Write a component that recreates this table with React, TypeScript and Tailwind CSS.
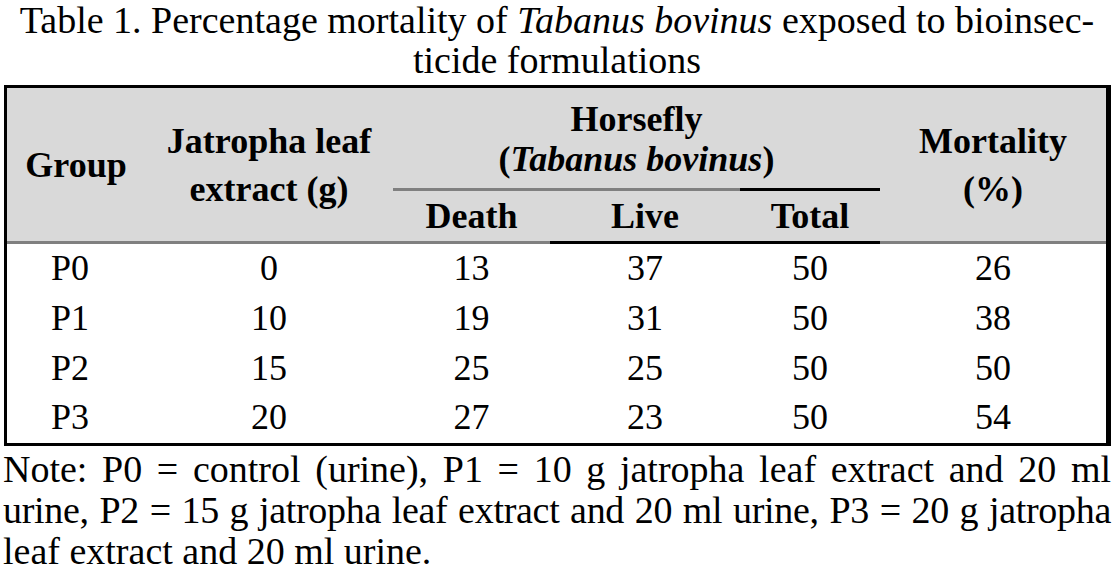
const rows = [
  { group: "P0", extract: "0", death: "13", live: "37", total: "50", mortality: "26" },
  { group: "P1", extract: "10", death: "19", live: "31", total: "50", mortality: "38" },
  { group: "P2", extract: "15", death: "25", live: "25", total: "50", mortality: "50" },
  { group: "P3", extract: "20", death: "27", live: "23", total: "50", mortality: "54" },
];

const cols = "grid grid-cols-[138px_248px_157px_190px_140px_1fr]";

export default function App() {
  return (
    <div className="w-[1114px] h-[573px] bg-white text-black overflow-hidden font-['Liberation_Serif','Times_New_Roman',serif]">
      {/* Caption */}
      <div className="text-center text-[38px] leading-[40px]">
        <div>
          Table 1. Percentage mortality of <i>Tabanus bovinus</i> exposed to bioinsec-
        </div>
        <div>ticide formulations</div>
      </div>

      {/* Table */}
      <div className="ml-[4px] mt-[5px] w-[1107px] border-[3px] border-r-[5px] border-black">
        <div className="bg-[#d9d9d9] font-bold text-[36px] leading-[40px]">
          <div className={cols}>
            <div className="row-span-3 flex items-center justify-center">Group</div>
            <div className="row-span-3 flex flex-col items-center justify-center">
              <span>Jatropha leaf</span>
              <span className="mt-[8px]">extract (g)</span>
            </div>
            <div className="col-span-3 h-[100px] flex flex-col items-center justify-end pb-[9px]">
              <span>Horsefly</span>
              <span>
                (<i>Tabanus bovinus</i>)
              </span>
            </div>
            <div className="row-span-3 flex flex-col items-center justify-center">
              <span>Mortality</span>
              <span className="mt-[8px]">(%)</span>
            </div>
            {/* Horsefly separator */}
            <div className="col-span-3 flex h-[3px]">
              <div className="w-[347px] bg-[#808080]" />
              <div className="w-[140px] bg-black" />
            </div>
            <div className="col-start-3 h-[50px] flex items-center justify-center">Death</div>
            <div className="col-start-4 h-[50px] flex items-center justify-center">Live</div>
            <div className="col-start-5 h-[50px] flex items-center justify-center">Total</div>
          </div>
        </div>
        {/* Header bottom rule */}
        <div className="flex h-[3px]">
          <div className="w-[543px] bg-[#808080]" />
          <div className="w-[330px] bg-black" />
          <div className="flex-1 bg-[#808080]" />
        </div>
        <div className="text-[36px]">
          {rows.map((r) => (
            <div key={r.group} className={`${cols} text-center h-[49.75px] leading-[49.75px]`}>
              <div className="pr-[12px]">{r.group}</div>
              <div>{r.extract}</div>
              <div>{r.death}</div>
              <div>{r.live}</div>
              <div>{r.total}</div>
              <div>{r.mortality}</div>
            </div>
          ))}
        </div>
      </div>

      {/* Note */}
      <div className="px-[3px] pt-[3px] text-[38px] leading-[41px] text-justify">
        <div className="[text-align-last:justify]">
          Note: P0 = control (urine), P1 = 10 g jatropha leaf extract and 20 ml
        </div>
        <div className="[text-align-last:justify] tracking-[-0.3px]">
          urine, P2 = 15 g jatropha leaf extract and 20 ml urine, P3 = 20 g jatropha
        </div>
        <div>leaf extract and 20 ml urine.</div>
      </div>
    </div>
  );
}
